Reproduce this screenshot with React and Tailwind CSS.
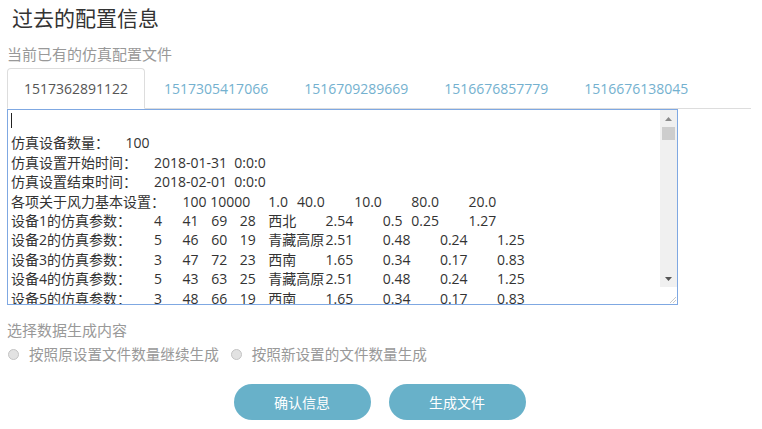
import React from 'react';

const TABS = ['1517362891122', '1517305417066', '1516709289669', '1516676857779', '1516676138045'];

// grid column start classes, written out so Tailwind picks them up
const COL = {
  1: 'col-start-1',
  5: 'col-start-5',
  6: 'col-start-6',
  7: 'col-start-7',
  8: 'col-start-8',
  9: 'col-start-9',
  10: 'col-start-10',
  11: 'col-start-11',
  12: 'col-start-12',
  13: 'col-start-13',
  14: 'col-start-14',
  15: 'col-start-15',
  16: 'col-start-16',
  17: 'col-start-17',
  18: 'col-start-18',
};

const device = (n, a, b, c, d, region, v1, v2, v3, c3, v4, c4) => [
  [1, `设备${n}的仿真参数：`],
  [6, a],
  [7, b],
  [8, c],
  [9, d],
  [10, region],
  [12, v1],
  [14, v2],
  [c3, v3],
  [c4, v4],
];

const LINES = [
  [[1, '仿真设备数量：'], [5, '100']],
  [[1, '仿真设置开始时间：'], [6, '2018-01-31  0:0:0']],
  [[1, '仿真设置结束时间：'], [6, '2018-02-01  0:0:0']],
  [[1, '各项关于风力基本设置：'], [7, '100 10000'], [10, '1.0'], [11, '40.0'], [13, '10.0'], [15, '80.0'], [17, '20.0']],
  device(1, '4', '41', '69', '28', '西北', '2.54', '0.5', '0.25', 15, '1.27', 17),
  device(2, '5', '46', '60', '19', '青藏高原', '2.51', '0.48', '0.24', 16, '1.25', 18),
  device(3, '3', '47', '72', '23', '西南', '1.65', '0.34', '0.17', 16, '0.83', 18),
  device(4, '5', '43', '63', '25', '青藏高原', '2.51', '0.48', '0.24', 16, '1.25', 18),
  device(5, '3', '48', '66', '19', '西南', '1.65', '0.34', '0.17', 16, '0.83', 18),
];

function ScrollBar() {
  return (
    <div className="w-[17px] shrink-0 flex flex-col">
      <div className="flex-1 flex flex-col bg-[#f0f0f0]">
        <div className="h-[17px] flex items-center justify-center">
          <svg width="7" height="4" viewBox="0 0 7 4">
            <polygon points="3.5,0 7,4 0,4" fill="#8a8a8a" />
          </svg>
        </div>
        <div className="h-[13px] mx-[2px] bg-[#cdcdcd]" />
        <div className="flex-1" />
        <div className="h-[17px] flex items-center justify-center">
          <svg width="7" height="4" viewBox="0 0 7 4">
            <polygon points="0,0 7,0 3.5,4" fill="#555" />
          </svg>
        </div>
      </div>
      <div className="h-[17px] bg-white flex items-end justify-end">
        <svg width="8" height="8" viewBox="0 0 8 8">
          <line x1="7" y1="1" x2="1" y2="7" stroke="#c8c8c8" strokeWidth="1" />
          <line x1="7" y1="4" x2="4" y2="7" stroke="#c8c8c8" strokeWidth="1" />
        </svg>
      </div>
    </div>
  );
}

function Radio({ label }) {
  return (
    <label className="flex items-center gap-[10px]">
      <span className="w-[11px] h-[11px] rounded-full border border-[#c4c4c4] bg-[#e2e2e2]" />
      <span>{label}</span>
    </label>
  );
}

export default function App() {
  return (
    <div className="w-[762px] h-[429px] bg-white px-[7px] font-['Open_Sans','Noto_Sans_CJK_SC',sans-serif] overflow-hidden">
      <h1 className="pt-[4px] pl-[5px] text-[21px] leading-[28px] text-[#333] font-normal">过去的配置信息</h1>

      <p className="mt-[12px] text-[15px] leading-[20px] text-[#999]">当前已有的仿真配置文件</p>

      {/* file tabs */}
      <ul className="mt-[4px] flex w-[744px] border-b border-[#ddd]">
        {TABS.map((t, i) => (
          <li
            key={t}
            className={`mr-[2px] -mb-px px-[16px] pt-[10px] pb-[9px] text-[14px] leading-[20px] rounded-t-[4px] border ${
              i === 0 ? 'border-[#ddd] border-b-white bg-white text-[#555]' : 'border-transparent text-[#74b1cf]'
            }`}
          >
            {t}
          </li>
        ))}
      </ul>

      {/* config file content */}
      <div className="w-[671px] h-[196px] flex border border-[#7fa8e2] bg-white">
        <div className="flex-1 overflow-hidden pl-[3px] pt-[4px] text-[14px] leading-[19.4px] text-[#333]">
          <div className="h-[19.4px] flex items-start">
            <span className="mt-[-1px] w-px h-[15px] bg-[#222]" />
          </div>
          {LINES.map((line, i) => (
            <div key={i} className="grid grid-cols-[repeat(20,28.6px)]">
              {line.map(([c, text], j) => (
                <span key={j} className={`${COL[c]} whitespace-pre`}>
                  {text}
                </span>
              ))}
            </div>
          ))}
        </div>
        <ScrollBar />
      </div>

      <p className="mt-[15px] text-[15px] leading-[20px] text-[#999]">选择数据生成内容</p>

      <div className="mt-[4px] flex items-center gap-[12px] pl-[1px] text-[14.6px] leading-[20px] text-[#999]">
        <Radio label="按照原设置文件数量继续生成" />
        <Radio label="按照新设置的文件数量生成" />
      </div>

      <div className="mt-[20px] flex justify-center gap-[18px] pr-[3px]">
        <button className="w-[137px] h-[36px] rounded-full bg-[#68b1c9] text-white text-[14px]">确认信息</button>
        <button className="w-[137px] h-[36px] rounded-full bg-[#68b1c9] text-white text-[14px]">生成文件</button>
      </div>
    </div>
  );
}
